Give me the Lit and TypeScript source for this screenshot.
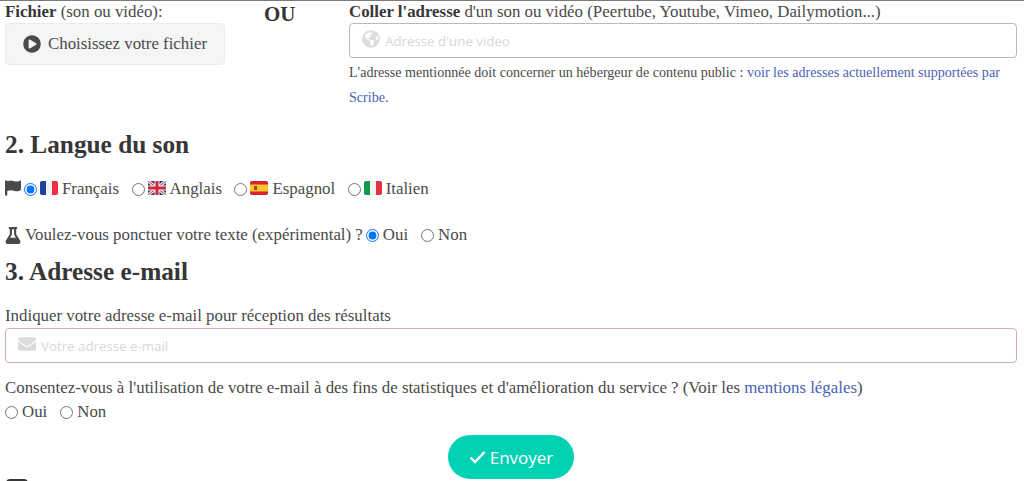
import { LitElement, html, css, svg } from "lit";
import { customElement } from "lit/decorators.js";

const icon = (vb: string, d: string, cls: string) =>
  html`<svg class=${cls} viewBox=${vb} aria-hidden="true"><path fill="currentColor" d=${d}></path></svg>`;

const PLAY = "M256 8C119 8 8 119 8 256s111 248 248 248 248-111 248-248S393 8 256 8zm115.7 272l-176 101c-15.8 8.8-35.7-2.5-35.7-21V152c0-18.4 19.8-29.8 35.7-21l176 107c16.4 9.2 16.4 32.9 0 42z";
const GLOBE = "M248 8C111.03 8 0 119.03 0 256s111.03 248 248 248 248-111.03 248-248S384.97 8 248 8zm82.29 357.6c-3.9 3.88-7.99 7.95-11.31 11.28-2.99 3-5.1 6.7-6.17 10.71-1.51 5.66-2.73 11.38-4.77 16.87l-17.39 46.85c-13.76 3-28 4.69-42.65 4.69v-27.38c1.69-12.62-7.64-36.26-22.63-51.25-6-6-9.37-14.14-9.37-22.63v-32.01c0-11.64-6.27-22.34-16.46-27.97-14.37-7.95-34.81-19.06-48.81-26.11-11.48-5.78-22.1-13.14-31.65-21.75l-.8-.72a114.792 114.792 0 0 1-18.06-20.74c-9.38-13.77-24.66-36.42-34.59-51.14 20.47-45.5 57.36-82.04 103.2-101.89l24.01 12.01C203.48 89.74 216 82.01 216 70.11v-11.3c7.99-1.29 16.12-2.11 24.39-2.42l28.3 28.3c6.25 6.25 6.25 16.38 0 22.63L264 112l-10.34 10.34c-3.12 3.12-3.12 8.19 0 11.31l4.69 4.69c3.12 3.12 3.12 8.19 0 11.31l-8 8a8.008 8.008 0 0 1-5.66 2.34h-8.99c-2.08 0-4.08.81-5.58 2.27l-9.92 9.65a8.008 8.008 0 0 0-1.58 9.31l15.59 31.19c2.66 5.32-1.21 11.58-7.15 11.58h-5.64c-1.93 0-3.79-.7-5.24-1.96l-9.28-8.06a16.017 16.017 0 0 0-15.55-3.1l-31.17 10.39a11.95 11.95 0 0 0-8.17 11.34c0 4.53 2.56 8.66 6.61 10.69l11.08 5.54c9.41 4.71 19.79 7.16 30.31 7.16s22.59 27.29 32 32h66.75c8.49 0 16.62 3.37 22.63 9.37l13.69 13.69a30.503 30.503 0 0 1 8.93 21.57 46.536 46.536 0 0 1-13.72 32.98zM417 274.25c-5.79-1.45-10.84-5-14.15-9.97l-17.98-26.97a23.97 23.97 0 0 1 0-26.62l19.59-29.38c2.32-3.47 5.5-6.29 9.24-8.15l12.98-6.49C440.2 193.59 448 223.87 448 256c0 8.67-.74 17.16-1.82 25.54L417 274.25z";
const MAIL = "M502.3 190.8c3.9-3.1 9.7-.2 9.7 4.7V400c0 26.5-21.5 48-48 48H48c-26.5 0-48-21.5-48-48V195.6c0-5 5.7-7.8 9.7-4.7 22.4 17.4 52.1 39.5 154.1 113.6 21.1 15.4 56.7 47.8 92.2 47.6 35.7.3 72-32.8 92.3-47.6 102-74.1 131.6-96.3 154-113.7zM256 320c23.2.4 56.6-29.2 73.4-41.4 132.7-96.3 142.8-104.7 173.4-128.7 5.8-4.5 9.2-11.5 9.2-18.9v-19c0-26.5-21.5-48-48-48H48C21.5 64 0 85.5 0 112v19c0 7.4 3.4 14.3 9.2 18.9 30.6 23.9 40.7 32.4 173.4 128.7 16.8 12.2 50.2 41.8 73.4 41.4z";
const FLAG = "M0 16h72v480H0z M72 40c36-16 76-24 118-24 62 0 108 34 168 34 50 0 100-14 154-42v300c-44 30-94 50-154 50-64 0-110-32-168-32-44 0-84 8-118 24z";
const FLASK = "M437.2 403.5L320 215V64h8c13.3 0 24-10.7 24-24V24c0-13.3-10.7-24-24-24H120c-13.3 0-24 10.7-24 24v16c0 13.3 10.7 24 24 24h8v151L10.8 403.5C-18.5 450.6 15.3 512 70.9 512h306.2c55.7 0 89.4-61.5 60.1-108.5zM137.9 320l48.2-77.6c3.7-5.2 5.8-11.6 5.8-18.4V64h64v160c0 6.9 2.2 13.2 5.8 18.4l48.2 77.6h-172z";

const flagSvg = (inner: unknown) =>
  html`<svg class="flag" viewBox="0 0 18 14" aria-hidden="true"><defs><clipPath id="fc"><rect width="18" height="14" rx="2"></rect></clipPath></defs><g clip-path="url(#fc)">${inner}</g></svg>`;

const FR = svg`<rect width="6" height="14" fill="#1d3f9e"/><rect x="6" width="6" height="14" fill="#f2f2f2"/><rect x="12" width="6" height="14" fill="#ee2f45"/>`;
const GB = svg`<rect width="18" height="14" fill="#2b3f87"/><path d="M0 0L18 14M18 0L0 14" stroke="#eee" stroke-width="3"/><path d="M0 0L18 14M18 0L0 14" stroke="#d0283c" stroke-width="1"/><path d="M9 0V14M0 7H18" stroke="#eee" stroke-width="5"/><path d="M9 0V14M0 7H18" stroke="#d0283c" stroke-width="3"/>`;
const ES = svg`<rect width="18" height="14" fill="#d8232a"/><rect y="3.5" width="18" height="7" fill="#fbc52d"/><rect x="4" y="5" width="3" height="4" fill="#b5402a"/>`;
const IT = svg`<rect width="6" height="14" fill="#0f9a4a"/><rect x="6" width="6" height="14" fill="#f2f2f2"/><rect x="12" width="6" height="14" fill="#e0323f"/>`;

@customElement("app-root")
export class AppRoot extends LitElement {
  static styles = css`
    :host {
      display: block;
      height: 481px;
      overflow: hidden;
      box-sizing: border-box;
      border-top: 1px solid #7a7a7a;
      padding: 0 7px 0 5px;
      background: #fff;
      color: #4a4a4a;
      font: 16.85px/1.5 "Liberation Serif", serif;
    }
    * { box-sizing: border-box; }
    b, h2, .ou { color: #363636; }
    a { color: #4a5fb5; text-decoration: none; }
    .top { display: flex; height: 109px; }
    .file { width: 259px; }
    .field-label { line-height: 21px; height: 22px; white-space: nowrap; }
    .btn-file {
      display: inline-flex; align-items: center; gap: 7px;
      width: 220px; height: 42px; padding-left: 17px;
      background: #f5f5f5; border: 1px solid #ececec; border-radius: 4px;
    }
    .ico-play { width: 18px; height: 18px; color: #4a4a4a; }
    .ou { width: 85px; font-size: 21px; font-weight: 700; line-height: 26px; }
    .url { flex: 1; }
    .input {
      display: flex; align-items: center;
      border: 1px solid #b5b9c5; border-radius: 4px;
      font: 13.3px "Open Sans", sans-serif; color: #d8d8d8;
      background: #fff;
    }
    .input.v { height: 35px; padding-left: 12px; gap: 5px; }
    .input.m { height: 35px; padding-left: 12px; gap: 5px; border-color: #dba9b2; }
    .ico-in { width: 18px; height: 18px; color: #dcdcdc; margin-top: -4px; }
    .help { margin: 2px 0 0; font-size: 14.08px; line-height: 25px; }
    h2 { margin: 0; font-size: 25.3px; line-height: 34px; font-weight: 700; }
    .h1 { margin-top: 17px; }
    .langs { display: flex; align-items: center; margin-top: 16px; height: 24px; }
    .opt { display: inline-flex; align-items: center; }
    input[type="radio"] { width: 13px; height: 13px; margin: 0 3px 0 0; }
    .flag { width: 18px; height: 14px; margin-right: 4px; margin-top: -3px; }
    .ico-flag { width: 16px; height: 16px; margin-right: 3px; margin-top: -3px; color: #4a4a4a; }
    .ico-flask { width: 16px; height: 17px; margin-right: 4px; color: #4a4a4a; }
    .langs .opt { margin-right: 12.5px; }
    .ponct { display: flex; align-items: center; margin-top: 22px; height: 24px; }
    .ponct .q { margin-right: 3px; }
    .ponct .opt { margin-right: 13px; }
    .ponct input { margin-right: 4px; }
    .h2 { margin-top: 7px; }
    .lbl { margin-top: 16px; height: 24px; line-height: 24px; }
    .consent { margin-top: 13px; height: 24px; line-height: 24px; white-space: nowrap; }
    .yn { display: flex; height: 24px; align-items: center; }
    .yn .opt { margin-right: 13px; }
    .yn input { margin-right: 4px; }
    .send { display: flex; justify-content: center; margin-top: 11px; }
    .btn-send {
      display: inline-flex; align-items: center; justify-content: center; gap: 4px;
      width: 126px; height: 44px; border-radius: 22px;
      background: #00d1b2; color: #fff;
      font: 17px "Open Sans", sans-serif;
    }
    .ico-check { width: 17px; height: 14px; fill: none; stroke: #fff; stroke-width: 2.4; }
    .stub { width: 22px; height: 16px; margin: 0 0 0 1px; background: #363636; border-radius: 4px; }
  `;

  private opt(label: string, checked: boolean, name: string, flag?: unknown) {
    return html`<label class="opt"><input type="radio" name=${name} ?checked=${checked} />${flag ? flagSvg(flag) : ""}${label}</label>`;
  }

  render() {
    return html`
      <div class="top">
        <div class="file">
          <div class="field-label"><b>Fichier</b> (son ou vidéo):</div>
          <div class="btn-file">${icon("0 0 512 512", PLAY, "ico-play")}Choisissez votre fichier</div>
        </div>
        <div class="ou">OU</div>
        <div class="url">
          <div class="field-label"><b>Coller l'adresse</b> d'un son ou vidéo (Peertube, Youtube, Vimeo, Dailymotion...)</div>
          <div class="input v">${icon("0 0 496 512", GLOBE, "ico-in")}Adresse d'une video</div>
          <p class="help">L'adresse mentionnée doit concerner un hébergeur de contenu public : <a>voir les adresses actuellement supportées par Scribe.</a></p>
        </div>
      </div>
      <h2 class="h1">2. Langue du son</h2>
      <div class="langs">
        ${icon("0 0 512 512", FLAG, "ico-flag")}
        ${this.opt("Français", true, "lang", FR)}
        ${this.opt("Anglais", false, "lang", GB)}
        ${this.opt("Espagnol", false, "lang", ES)}
        ${this.opt("Italien", false, "lang", IT)}
      </div>
      <div class="ponct">
        ${icon("0 0 448 512", FLASK, "ico-flask")}
        <span class="q">Voulez-vous ponctuer votre texte (expérimental) ?</span>
        ${this.opt("Oui", true, "ponct")}
        ${this.opt("Non", false, "ponct")}
      </div>
      <h2 class="h2">3. Adresse e-mail</h2>
      <div class="lbl">Indiquer votre adresse e-mail pour réception des résultats</div>
      <div class="input m">${icon("0 0 512 512", MAIL, "ico-in")}Votre adresse e-mail</div>
      <div class="consent">Consentez-vous à l'utilisation de votre e-mail à des fins de statistiques et d'amélioration du service ? (Voir les <a>mentions légales</a>)</div>
      <div class="yn">
        ${this.opt("Oui", false, "stat")}
        ${this.opt("Non", false, "stat")}
      </div>
      <div class="send"><div class="btn-send"><svg class="ico-check" viewBox="0 0 17 14" aria-hidden="true"><path d="M1.5 7.5L6 12L15.5 2"></path></svg>Envoyer</div></div>
      <div class="stub"></div>
    `;
  }
}
